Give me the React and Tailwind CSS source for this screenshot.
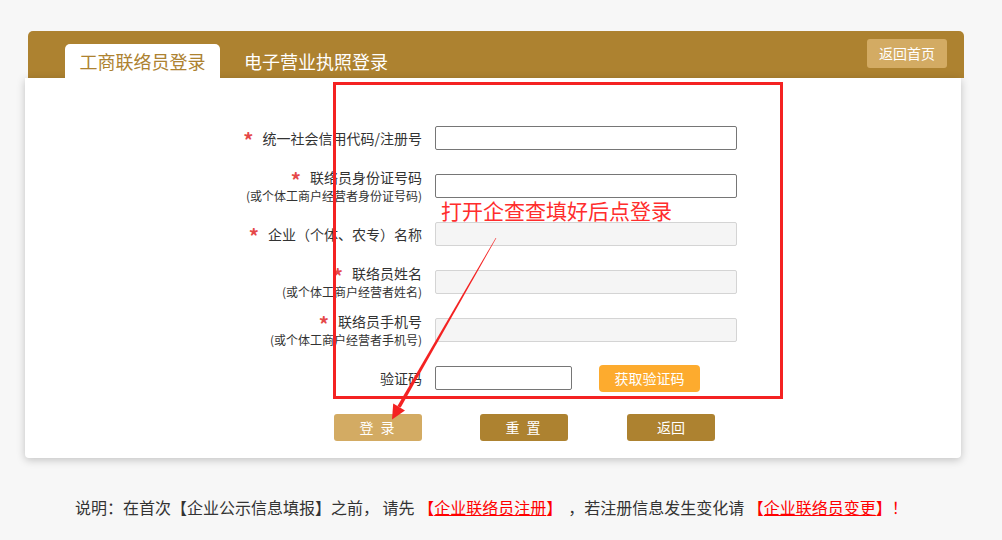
import React from 'react';

const FONT = "font-['Noto_Sans_CJK_SC','Noto_Sans',sans-serif]";

const fields = [
  { label: '统一社会信用代码/注册号', required: true },
  { label: '联络员身份证号码', sub: '(或个体工商户经营者身份证号码)', required: true },
  { label: '企业（个体、农专）名称', required: true, disabled: true },
  { label: '联络员姓名', sub: '(或个体工商户经营者姓名)', required: true, disabled: true },
  { label: '联络员手机号', sub: '(或个体工商户经营者手机号)', required: true, disabled: true },
];

const FieldLabel = ({ label, sub, required }) => (
  <div className="w-[200px] flex flex-col items-end text-[#333]">
    <div className="flex items-center">
      {required && (
        <span className="relative top-[2px] h-[12px] text-[20px] leading-[12px] font-bold text-[#e54848] mr-[9px]">*</span>
      )}
      <span className="text-[14px] leading-[17px]">{label}</span>
    </div>
    {sub && <span className="text-[12px] leading-[14px] mt-[3px]">{sub}</span>}
  </div>
);

const App = () => {
  return (
    <div className={`relative w-[1002px] h-[540px] bg-[#f7f7f7] overflow-hidden ${FONT}`}>
      <div className="pt-[31px] pl-[25px]">
        {/* Tabs header */}
        <div className="ml-[3px] w-[936px] h-[47px] bg-[#ad8230] rounded-t-[5px] flex items-end pl-[37px]">
          <div className="w-[155px] h-[34px] bg-white rounded-t-[5px] flex items-center justify-center text-[18px] text-[#ad8230]">
            工商联络员登录
          </div>
          <div className="ml-[24px] h-[34px] flex items-center text-[18px] text-white">
            电子营业执照登录
          </div>
          <button className="ml-auto self-start mt-[8px] mr-[17px] w-[80px] h-[29px] rounded-[3px] bg-[#d3ab63] text-white text-[14px]">
            返回首页
          </button>
        </div>

        {/* Login form */}
        <div className="w-[936px] bg-white rounded-b-[4px] shadow-[0_2px_8px_rgba(0,0,0,0.22)] pt-[36px] pb-[17px]">
          <div className="ml-[197px] flex flex-col">
            {fields.map((f) => (
              <div key={f.label} className="h-[48px] flex items-center">
                <FieldLabel {...f} />
                <input
                  disabled={f.disabled}
                  className={`ml-[13px] w-[302px] h-[24px] rounded-[2px] border outline-none ${
                    f.disabled ? 'bg-[#f5f5f5] border-[#d4d4d4]' : 'bg-white border-[#767676]'
                  }`}
                />
              </div>
            ))}
            <div className="h-[48px] flex items-center">
              <div className="w-[200px] text-right text-[14px] text-[#333]">验证码</div>
              <input className="ml-[13px] w-[137px] h-[24px] rounded-[2px] border border-[#767676] outline-none" />
              <button className="ml-[27px] w-[101px] h-[27px] rounded-[4px] bg-[#fdab2e] text-white text-[14px]">
                获取验证码
              </button>
            </div>
          </div>

          <div className="mt-[12px] ml-[309px] flex gap-[58px]">
            <button className="w-[88px] h-[27px] rounded-[3px] bg-[#d3ab63] text-white text-[14px] tracking-[2px]">登 录</button>
            <button className="w-[88px] h-[27px] rounded-[3px] bg-[#ad8230] text-white text-[14px] tracking-[2px]">重 置</button>
            <button className="ml-[1px] w-[88px] h-[27px] rounded-[3px] bg-[#ad8230] text-white text-[14px]">返回</button>
          </div>
        </div>
      </div>

      {/* Notice */}
      <p className="mt-[37px] pl-[75px] text-[16px] leading-[24px] text-[#333] whitespace-pre">
        说明：在首次【企业公示信息填报】之前， 请先 <span className="text-[#f00]">【<a className="underline">企业联络员注册</a>】</span><span className="ml-[14px]">，</span>若注册信息发生变化请 <span className="text-[#f00]">【<a className="underline">企业联络员变更</a>】！</span>
      </p>

      {/* Red annotation */}
      <div className="absolute left-[333px] top-[82px] w-[450px] h-[317px] border-[3px] border-[#f42222] pointer-events-none" />
      <div className="absolute left-[441px] top-[200px] text-[21px] leading-none text-[#ff2d2d] pointer-events-none">
        打开企查查填好后点登录
      </div>
      <svg className="absolute left-0 top-0 pointer-events-none" width="1002" height="540">
        <polygon
          points="496.3,238.1 495.7,237.9 397.3,406.2 400.7,407.6"
          fill="#f42222"
        />
        <polygon points="392,419.5 405,410.5 393.2,403.6" fill="#f42222" />
      </svg>
    </div>
  );
};

export default App;
